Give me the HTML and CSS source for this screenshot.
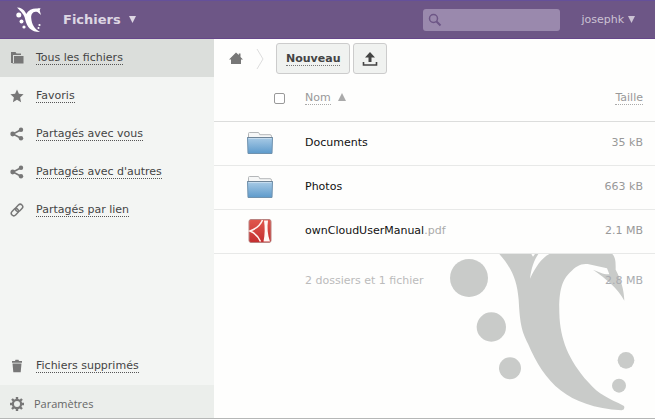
FILE: index.html
```html
<!DOCTYPE html>
<html lang="fr">
<head>
<meta charset="utf-8">
<title>Fichiers</title>
<link rel="stylesheet" href="styles.css">
</head>
<body>
<svg class="defs" aria-hidden="true">
  <defs>
    <linearGradient id="blue" x1="0" y1="0" x2="0" y2="1"><stop offset="0" stop-color="#a9cbe6"/><stop offset="1" stop-color="#5d9acb"/></linearGradient>
    <linearGradient id="red" x1="0" y1="0" x2="0" y2="1"><stop offset="0" stop-color="#e0584d"/><stop offset="1" stop-color="#c42e30"/></linearGradient>
    <symbol id="folder" viewBox="0 0 28 24">
      <path d="M2.500 11V2.500q0-1 1-1h8.500q1 0 1.300 1l.4 1.200H24q1.500 0 1.500 1.500V11z" fill="#f6f7f7" stroke="#b4b7b9"/>
      <path d="M1.500 6.500h25L26 22.500H2z" fill="url(#blue)" stroke="#7092ae"/>
      <path d="M1.500 6.500h25" stroke="#6f8598"/>
      <path d="M2.500 7.500h23" stroke="#c5dcef"/>
    </symbol>
    <symbol id="share" viewBox="0 0 14 14">
      <path d="M11.500 2.500 3 7l8.500 4.500" fill="none" stroke="currentColor" stroke-width="1.600"/>
      <circle cx="11" cy="2.700" r="2.200"/><circle cx="2.700" cy="7" r="2.400"/><circle cx="11" cy="11.300" r="2.200"/>
    </symbol>
  </defs>
</svg>
<header class="topbar">
  <svg class="logo" viewBox="0 0 26 28" aria-hidden="true">
    <path d="M1 1.500C5 1.500 8 3.500 9.500 6.500l.7 1.500c2.300-3.700 5.800-5.500 9.800-5.500 1.800 0 3-.2 4.500-.5l-.8 2.500L25 9l-3.500-3C17 4.500 15 8 15.200 12c.5 6.500 3.300 11 8.800 14-8.500.2-13-4.500-14.800-12.500C8.300 8 5 6 1 1.500z"/>
    <circle cx="2.800" cy="9" r="2.500"/><circle cx="5.500" cy="15.500" r="2"/><circle cx="8" cy="21" r="1.600"/><circle cx="23.500" cy="19" r="1.100"/><circle cx="22.500" cy="22" r="1"/>
  </svg>
  <button class="app-menu" type="button">Fichiers <svg class="caret" viewBox="0 0 8 8" aria-hidden="true"><path d="M0 0h8L4 8z"/></svg></button>
  <label class="search">
    <svg viewBox="0 0 14 14" aria-hidden="true"><circle cx="5.500" cy="5.500" r="4" fill="none" stroke="currentColor" stroke-width="1.500"/><path d="m8.500 8.500 4 4" stroke="currentColor" stroke-width="2"/></svg>
    <input type="search" aria-label="Rechercher">
  </label>
  <button class="user-menu" type="button">josephk <svg class="caret" viewBox="0 0 8 8" aria-hidden="true"><path d="M0 0h8L4 8z"/></svg></button>
</header>
<div class="page">
  <nav class="sidebar">
    <a class="item active" href="#tous"><svg viewBox="0 0 14 14" aria-hidden="true"><path d="M1 1h4.500l1 1.500H11V4H3v8H1z"/><path d="M4 5h9.500v7.500H2.500V12H4z"/></svg><span>Tous les fichiers</span></a>
    <a class="item" href="#favoris"><svg viewBox="0 0 14 14" aria-hidden="true"><path d="m7 .5 1.900 4.300 4.700.5-3.500 3.100 1 4.900L7 10.800l-4.100 2.500 1-4.900L.4 5.300l4.700-.5z"/></svg><span>Favoris</span></a>
    <a class="item" href="#vous"><svg aria-hidden="true"><use href="#share"/></svg><span>Partagés avec vous</span></a>
    <a class="item" href="#autres"><svg aria-hidden="true"><use href="#share"/></svg><span>Partagés avec d'autres</span></a>
    <a class="item" href="#lien"><svg viewBox="0 0 14 14" aria-hidden="true"><g fill="none" stroke="currentColor" stroke-width="1.500" transform="rotate(-45 7 7)"><rect x="0" y="4.500" width="8" height="5" rx="2.500"/><rect x="6" y="4.500" width="8" height="5" rx="2.500"/></g></svg><span>Partagés par lien</span></a>
    <a class="item trash" href="#supprimes"><svg viewBox="0 0 14 14" aria-hidden="true"><path d="M2 2h3l.5-1.200h3L9 2h3v1.700H2zM2.500 4.500h9l-.8 8.800H3.300z"/></svg><span>Fichiers supprimés</span></a>
    <button class="settings" type="button"><svg viewBox="0 0 14 14" aria-hidden="true"><circle cx="7" cy="7" r="4.100" fill="none" stroke="currentColor" stroke-width="2.200"/><path d="M7 0v3M7 11v3M0 7h3M11 7h3M2 2l2 2M10 10l2 2M2 12l2-2M10 4l2-2" stroke="currentColor" stroke-width="2.400"/></svg>Paramètres</button>
  </nav>
  <main class="content">
    <svg class="watermark" viewBox="0 0 675 498" aria-hidden="true">
      <path d="M208 6C245 48 261 84 266 143C270 220 276 238 294 275C345 393 410 463 575 475Q586 473 582 462C535 438 507 429 475 391C415 324 390 260 388 183C386 110 399 82 419 62C439 42 451 34 473 36L531 49L538 67C520 68 505 58 489 53C530 82 562 107 583 146C582 113 573 83 557 53C557 34 558 18 547 6H358C333 19 316 47 300 80C304 48 312 25 325 6H315L309 14L304 6z"/>
      <circle cx="117" cy="78" r="57"/><circle cx="184" cy="225" r="44"/><circle cx="240" cy="349" r="33"/><circle cx="588" cy="325" r="25"/><circle cx="567" cy="401" r="21"/>
    </svg>
    <div class="controls">
      <a class="home" href="#accueil" aria-label="Accueil"><svg viewBox="0 0 14 14" aria-hidden="true"><path d="M7 .5 0 7.500h2V12h10V7.500h2l-2.500-2.400V1.500H9.800V3z"/></svg></a>
      <svg class="chevron" viewBox="0 0 8 22" aria-hidden="true"><path d="m1 1 6 10-6 10" fill="none" stroke="#ddd"/></svg>
      <button class="btn" type="button"><span>Nouveau</span></button>
      <button class="btn upload" type="button" aria-label="Envoyer"><svg viewBox="0 0 16 16" aria-hidden="true"><path d="M8 1 3 6.500h3.500V11h3V6.500H13z"/><path d="M1.500 11v3h13v-3" fill="none" stroke="currentColor" stroke-width="1.600"/></svg></button>
    </div>
    <table class="files">
      <thead>
        <tr><th class="pick"><input type="checkbox" aria-label="Tout sélectionner"></th><th><a href="#nom">Nom</a><svg class="sort" viewBox="0 0 8 8" aria-hidden="true"><path d="M4 0 8 8H0z"/></svg></th><th class="size"><a href="#taille">Taille</a></th></tr>
      </thead>
      <tbody>
        <tr><td class="icon"><svg aria-hidden="true"><use href="#folder"/></svg></td><td>Documents</td><td class="size">35 kB</td></tr>
        <tr><td class="icon"><svg aria-hidden="true"><use href="#folder"/></svg></td><td>Photos</td><td class="size">663 kB</td></tr>
        <tr><td class="icon"><svg viewBox="0 0 28 24" aria-hidden="true"><rect x="3" y=".5" width="22" height="23" rx="2" fill="url(#red)" stroke="#b98280"/><path d="M16.500 1C14.500 6 9.500 10 4 12c5 2 8.500 6 10.500 10.500" fill="none" stroke="#fff4f0" stroke-width="1.600"/><path d="M18 1.500h4c-1 7-.5 14 2 21h-6.500c1.500-7 1.500-14 .5-21z" fill="#fff7f4"/></svg></td><td>ownCloudUserManual<span class="ext">.pdf</span></td><td class="size">2.1 MB</td></tr>
      </tbody>
      <tfoot>
        <tr><td></td><td>2 dossiers et 1 fichier</td><td class="size">2.8 MB</td></tr>
      </tfoot>
    </table>
  </main>
</div>
</body>
</html>
```
FILE: styles.css
```css
* { box-sizing: border-box; }

body {
  display: flex;
  flex-direction: column;
  min-height: 100vh;
  margin: 0;
  border-bottom: 1px solid #b5b7b6;
  background: #fefefd;
  color: #111;
  font: 11px/16px "DejaVu Sans", sans-serif;
}

.defs { position: absolute; width: 0; height: 0; }
svg { fill: currentColor; flex-shrink: 0; }
a { color: inherit; text-decoration: none; }
button { border: 0; padding: 0; background: none; color: inherit; font: inherit; }

.topbar {
  display: flex;
  align-items: center;
  height: 39px;
  padding: 0 20px 0 16px;
  border-top: 1px solid #65509a;
  border-bottom: 1px solid #66468a;
  background: #6d5686;
  color: #ddd6e3;
}
.logo { width: 26px; height: 28px; color: #fff; }
.app-menu {
  display: flex;
  align-items: center;
  gap: 8px;
  margin-left: 21px;
  font-size: 13px;
  font-weight: bold;
}
.caret { width: 7px; height: 7px; }
.search {
  display: flex;
  align-items: center;
  width: 137px;
  height: 22px;
  margin-left: auto;
  padding: 0 5px;
  border-radius: 3px;
  background: #9a89ad;
  color: #6d5686;
}
.search svg { width: 14px; height: 14px; }
.search input { flex: 1; min-width: 0; border: 0; outline: 0; background: none; font: inherit; }
.user-menu { display: flex; align-items: center; gap: 4px; margin-left: 21px; color: #cbc2d3; }

.page { display: flex; flex: 1; }

.sidebar {
  display: flex;
  flex-direction: column;
  width: 214px;
  flex-shrink: 0;
  background: #f3f5f3;
  color: #444;
}
.item { display: flex; align-items: center; gap: 12px; height: 38px; padding-left: 10px; }
.item svg, .settings svg { width: 14px; height: 14px; color: #777; }
.item span { border-bottom: 1px dotted #555; line-height: 13px; }
.active { background: #dbdedb; }
.trash { margin-top: auto; }
.settings {
  display: flex;
  align-items: center;
  gap: 10px;
  height: 33px;
  padding: 5px 0 0 10px;
  background: #ebeeeb;
  color: #666;
  font-family: "Open Sans", sans-serif;
}

.content { position: relative; flex: 1; min-width: 0; }
.watermark { position: absolute; right: 0; bottom: 0; width: 225px; height: 166px; color: #c9cbc9; }

.controls { display: flex; align-items: center; height: 39px; padding-left: 15px; }
.home { display: flex; color: #777; }
.home svg { width: 14px; height: 14px; }
.chevron { width: 8px; height: 22px; margin: 0 12px 0 13px; }
.btn {
  height: 31px;
  margin-right: 3px;
  padding: 0 9px;
  border: 1px solid #ccc;
  border-radius: 3px;
  background: #f0f2f0;
  color: #444;
  font-weight: bold;
}
.btn span { border-bottom: 1px dotted #777; }
.upload { display: flex; align-items: center; justify-content: center; width: 34px; padding: 0; }
.upload svg { width: 16px; height: 16px; }

.files { position: relative; width: 100%; border-collapse: collapse; }
.files th, .files td { height: 44px; padding: 0; border-bottom: 1px solid #e8e9e8; text-align: left; }
.files th { height: 43px; padding-bottom: 2px; border-color: #dcdddc; color: #999; font-weight: normal; }
.files th a { border-bottom: 1px dotted #aaa; }
.sort { width: 8px; height: 8px; margin-left: 7px; color: #aaa; }
.files .pick { width: 91px; padding-right: 20px; text-align: right; }
.pick input {
  appearance: none;
  width: 11px;
  height: 11px;
  margin: 0;
  border: 1px solid #999;
  border-radius: 2px;
  background: #fff;
  vertical-align: middle;
}
.files .icon { text-align: center; }
.icon svg { display: inline-block; width: 28px; height: 24px; vertical-align: middle; }
.files .size { width: 90px; padding-right: 12px; color: #999; text-align: right; }
.ext { color: #aaa; }
.files tfoot td { height: 56px; border: 0; color: #bbb; }
.files tfoot .size { color: #a9acb0; }
```
